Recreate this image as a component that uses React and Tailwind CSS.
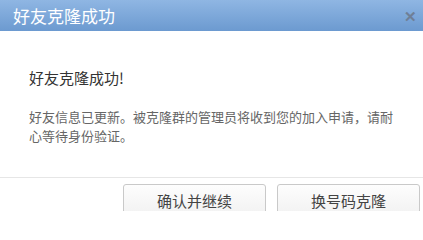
export default function App() {
  const font = { fontFamily: '"Noto Sans CJK SC", "Noto Sans", sans-serif' };
  return (
    <div className="w-[423px] h-[211px] overflow-hidden bg-white" style={font}>
      <div className="h-[31px] flex items-center justify-between pl-[13px] pr-[6px] bg-gradient-to-b from-[#8fb6e3] to-[#6c9ad0]">
        <span className="text-[17px] leading-none text-white">好友克隆成功</span>
        <span className="text-[#6f7f96] text-[15px] font-bold leading-none">✕</span>
      </div>
      <div className="pl-[29px] pt-[37px]">
        <p className="text-[15px] leading-[20px] text-[#333]">好友克隆成功!</p>
        <p className="mt-[19px] w-[370px] text-[13px] leading-[19px] text-[#666]">
          好友信息已更新。被克隆群的管理员将收到您的加入申请，请耐心等待身份验证。
        </p>
      </div>
      <div className="mt-[32px] border-t border-[#e6e6e6] flex gap-[11px] pl-[123px] pt-[6px]">
        <button className="w-[143px] h-[34px] border border-[#c9c9c9] rounded-[3px] bg-gradient-to-b from-[#fdfdfd] to-[#f1f1f1] text-[15px] text-[#444]">
          确认并继续
        </button>
        <button className="w-[143px] h-[34px] border border-[#c9c9c9] rounded-[3px] bg-gradient-to-b from-[#fdfdfd] to-[#f1f1f1] text-[15px] text-[#444]">
          换号码克隆
        </button>
      </div>
    </div>
  );
}
